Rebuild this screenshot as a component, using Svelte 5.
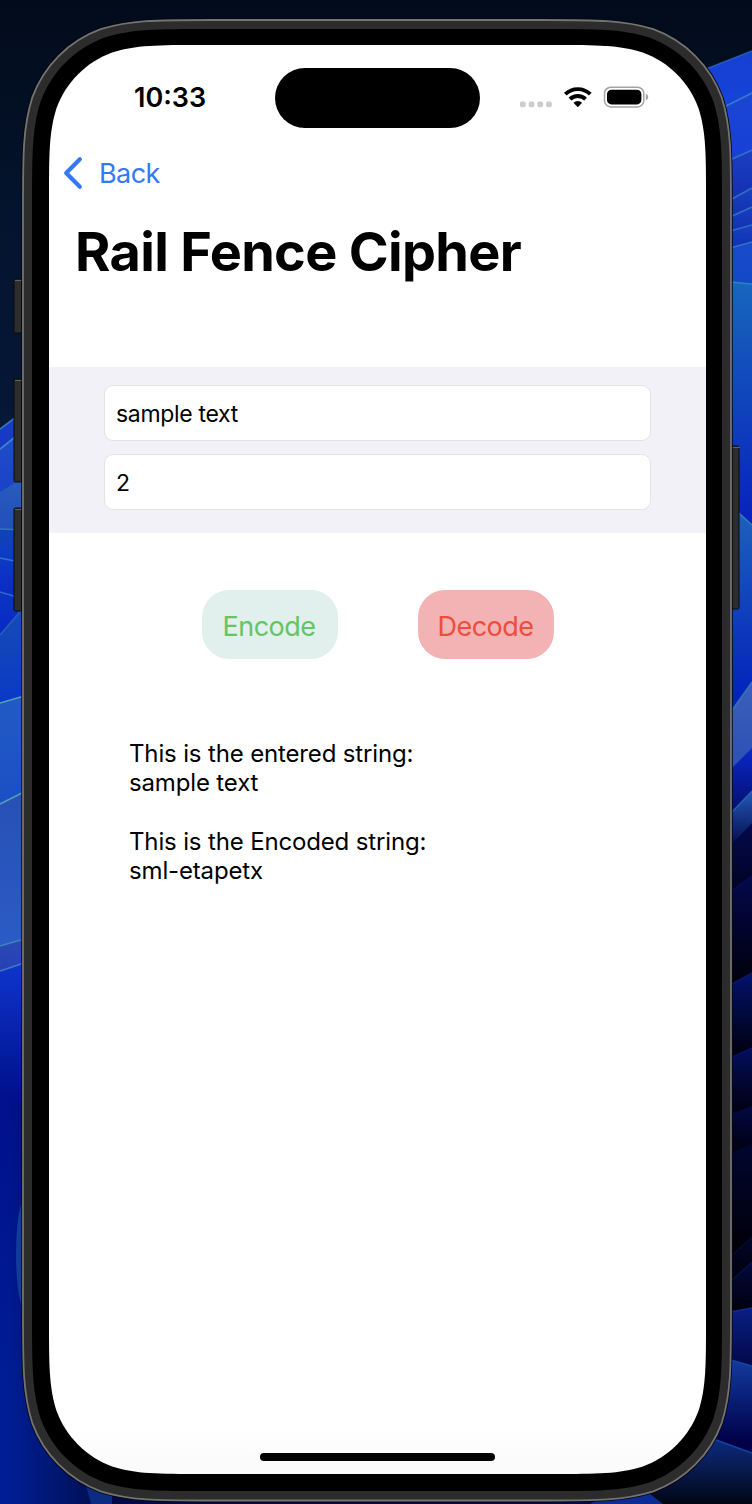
<script>
  let message = $state('sample text');
  let rails = $state('2');

  // Rounded rectangle with continuous-curvature corners
  function squircle(x0, y0, x1, y1, r) {
    const a = 1.528665 * r, b = 1.088493 * r, c = 0.868407 * r;
    const d = 0.631494 * r, e = 0.074911 * r, f = 0.372824 * r, g = 0.169059 * r;
    return `M${x0 + a} ${y0}H${x1 - a}` +
      `C${x1 - b} ${y0} ${x1 - c} ${y0} ${x1 - d} ${y0 + e}C${x1 - f} ${y0 + g} ${x1 - g} ${y0 + f} ${x1 - e} ${y0 + d}C${x1} ${y0 + c} ${x1} ${y0 + b} ${x1} ${y0 + a}` +
      `V${y1 - a}C${x1} ${y1 - b} ${x1} ${y1 - c} ${x1 - e} ${y1 - d}C${x1 - g} ${y1 - f} ${x1 - f} ${y1 - g} ${x1 - d} ${y1 - e}C${x1 - c} ${y1} ${x1 - b} ${y1} ${x1 - a} ${y1}` +
      `H${x0 + a}C${x0 + b} ${y1} ${x0 + c} ${y1} ${x0 + d} ${y1 - e}C${x0 + f} ${y1 - g} ${x0 + g} ${y1 - f} ${x0 + e} ${y1 - d}C${x0} ${y1 - c} ${x0} ${y1 - b} ${x0} ${y1 - a}` +
      `V${y0 + a}C${x0} ${y0 + b} ${x0} ${y0 + c} ${x0 + e} ${y0 + d}C${x0 + g} ${y0 + f} ${x0 + f} ${y0 + g} ${x0 + d} ${y0 + e}C${x0 + c} ${y0} ${x0 + b} ${y0} ${x0 + a} ${y0}Z`;
  }

  // Wallpaper petals: [x start, y start, x end, y end, gradient length, top, bottom, rim]
  const petals = [
    [0, 429, 24, 411, 30, '#1a3fc4', '#1535c8', '#3f86c8'],
    [0, 449, 24, 430, 55, '#1f4fcb', '#1a3fc6', '#4a96cc'],
    [0, 493, 24, 478, 50, '#2a5cbc', '#1d4cb8', '#2a5cbc'],
    [0, 529, 24, 530, 32, '#1243b4', '#0a3ac8', '#3a82c4'],
    [0, 558, 24, 563, 36, '#0c3bc4', '#0a28c4', '#3f7fd0'],
    [0, 592, 24, 599, 50, '#0b35c2', '#0824c8', '#3c74cc'],
    [0, 635, 24, 607, 70, '#174cb4', '#0a38c8', '#2c66bc'],
    [0, 703, 24, 696, 95, '#225ac4', '#1b50c4', '#63b5b8'],
    [0, 804, 24, 792, 145, '#2850b4', '#2a5cc6', '#5bb0b4'],
    [0, 946, 24, 939, 26, '#2b49b8', '#2640b4', '#4a8fb8'],
    [0, 971, 24, 963, 125, '#0f35cc', '#00118c', '#468fb4'],
    [0, 1096, 150, 1096, 320, '#00118c', '#001e94', 'none'],
    [696, 73, 752, 51, 48, '#163fd0', '#1545dc', '#2b68cc'],
    [716, 111, 752, 93, 56, '#1a46d2', '#163fd8', '#3f86c8'],
    [730, 160, 752, 150, 40, '#1a3fc0', '#142fb4', '#3a7cc0'],
    [730, 200, 752, 188, 18, '#1840c0', '#1230ae', '#3a7cc0'],
    [730, 217, 752, 207, 16, '#163ec0', '#1230b0', '#3a7cc0'],
    [730, 231, 752, 225, 18, '#1640c0', '#1030b4', '#3a7cc0'],
    [730, 248, 752, 242, 38, '#1a4acc', '#1248c8', '#3a82c4'],
    [730, 282, 752, 284, 230, '#1866bc', '#0824bc', '#3a8cc0'],
    [730, 505, 752, 525, 170, '#1f63bc', '#0324bc', '#3a8cb8'],
    [730, 713, 752, 682, 60, '#3b5fbc', '#2c50b4', '#3c78b4'],
    [730, 769, 752, 747, 50, '#0a28cc', '#030c60', '#2c56b4'],
    [730, 814, 752, 791, 32, '#2459b8', '#03094c', '#2c66b4'],
    [730, 846, 752, 823, 50, '#03094c', '#010320', 'none'],
    [730, 892, 752, 876, 90, '#03084c', '#00000c', '#060c58'],
    [730, 985, 752, 973, 70, '#03126c', '#00000e', '#0a1c70'],
    [730, 1058, 752, 1048, 54, '#030e5c', '#000010', '#06146c'],
    [730, 1114, 752, 1106, 38, '#020944', '#00000e', 'none'],
    [730, 1153, 752, 1144, 102, '#010630', '#000006', 'none'],
    [730, 1257, 752, 1237, 24, '#020628', '#00000c', '#060c34'],
    [730, 1282, 752, 1262, 28, '#030a3c', '#00000e', '#08124c'],
    [730, 1312, 752, 1308, 50, '#0a1f84', '#030a4c', '#1434a0'],
    [714, 1355, 752, 1366, 76, '#143ea4', '#000048', '#184cac'],
    [640, 1412, 752, 1453, 56, '#113cae', '#01020c', '#1b4cb4'],
  ];
  const keys = [[14, 279, 54], [14, 379, 103], [14, 508, 103], [731, 446, 163]];
</script>

<main>
  <svg class="backdrop" width="752" height="1504" viewBox="0 0 752 1504" aria-hidden="true">
    <defs>
      <linearGradient id="sky" x1="0" y1="0" x2="0" y2="440" gradientUnits="userSpaceOnUse">
        <stop offset="0" stop-color="#020b1a" /><stop offset=".5" stop-color="#04142e" /><stop offset="1" stop-color="#061838" />
      </linearGradient>
      <linearGradient id="shade" x1="8" y1="0" x2="90" y2="0" gradientUnits="userSpaceOnUse">
        <stop offset="0" stop-color="#000830" stop-opacity="0" /><stop offset="1" stop-color="#000830" stop-opacity=".6" />
      </linearGradient>
      <linearGradient id="paper" x1="0" y1="1430" x2="0" y2="1474" gradientUnits="userSpaceOnUse">
        <stop offset="0" stop-color="#fff" /><stop offset="1" stop-color="#fafafa" />
      </linearGradient>
      {#each petals as p, i}
        <linearGradient id="p{i}" x1="0" y1={Math.min(p[1], p[3])} x2="0" y2={Math.max(p[1], p[3]) + p[4]} gradientUnits="userSpaceOnUse">
          <stop offset="0" stop-color={p[5]} /><stop offset="1" stop-color={p[6]} />
        </linearGradient>
      {/each}
    </defs>
    <rect width="752" height="1504" fill="url(#sky)" />
    {#each petals as p, i}
      <path d="M{p[0]} {p[1]}L{p[2]} {p[3]}V1504H{p[0]}Z" fill="url(#p{i})" />
      <path d="M{p[0]} {p[1]}L{p[2]} {p[3]}" stroke={p[7]} stroke-width="1.6" stroke-opacity=".8" />
    {/each}
    <rect y="1100" width="110" height="404" fill="url(#shade)" />
    <ellipse cx="25" cy="1254" rx="9" ry="55" fill="#103c9c" />
    <path d="M82 1470H400V1504H91Z" fill="#0c2c84" />
    <path d="M112 1480H640V1504H112Z" fill="#030a48" />
    <path d="M632 1480L663 1504H590Z" fill="#0c2c94" />
    {#each keys as b}
      <rect x={b[0]} y={b[1]} width="8" height={b[2]} rx="1.5" fill="#2d2d2d" stroke="#0a0a0a" stroke-width="1" />
      <path d="M{b[0] + 1} {b[1] + 1.5}h8" stroke="#626262" />
    {/each}
    <path d={squircle(22, 19, 732, 1501.5, 124)} fill="#2c2c2c" stroke="#07070b" stroke-width="1.5" />
    <path d={squircle(23, 20, 731, 1500.5, 123)} fill="none" stroke="#737373" stroke-width="1.8" />
    <path d={squircle(32, 29, 722, 1491, 115)} fill="#000" />
    <path d={squircle(49, 45, 706, 1474, 100)} fill="url(#paper)" />
  </svg>

  <div class="screen">
    <header class="status">
      <time>10:33</time>
      <div class="island"></div>
      <svg class="indicators" width="129" height="30" viewBox="520 83 129 30" aria-hidden="true">
        {#each [520, 528.7, 537.4, 546.1] as x}
          <rect {x} y="101.5" width="5.7" height="5.7" rx="1.8" fill="#ccc" />
        {/each}
        <g fill="none" stroke="#000" stroke-width="3.9">
          <path d="M565.3 94.2a18 18 0 0 1 25 0" />
          <path d="M570 99.1a11.3 11.3 0 0 1 15.6 0" />
        </g>
        <path d="M577.8 107.2l-4.3-4.4a6.2 6.2 0 0 1 8.6 0z" />
        <rect x="604.5" y="87.3" width="39.3" height="19.6" rx="6.2" fill="none" stroke="#a3a3a3" stroke-width="1.5" />
        <rect x="607" y="89.8" width="34.4" height="14.6" rx="4.4" />
        <path d="M645.8 93.7c3.2 1.2 3.2 5.5 0 6.7z" fill="#a3a3a3" />
      </svg>
    </header>

    <nav>
      <svg width="20" height="34" viewBox="0 0 20 34" aria-hidden="true">
        <path d="M16.8 3.3L3.2 17l13.6 13.7" fill="none" stroke="#3478f6" stroke-width="4.2" stroke-linecap="round" stroke-linejoin="round" />
      </svg>
      <span>Back</span>
    </nav>

    <h1>Rail Fence Cipher</h1>

    <section class="fields">
      <div class="field">{message}</div>
      <div class="field">{rails}</div>
    </section>

    <div class="actions">
      <button class="encode">Encode</button>
      <button class="decode">Decode</button>
    </div>

    <section class="result">
      <p>This is the entered string:<br />{message}</p>
      <p>This is the Encoded string:<br />sml-etapetx</p>
    </section>

    <div class="home"></div>
  </div>
</main>

<style>
  :global(body) { margin: 0; background: #020b1a; }
  main {
    position: relative;
    box-sizing: border-box;
    width: 752px;
    height: 1504px;
    padding: 45px 46px 30px 49px;
    overflow: hidden;
    font-family: Inter, "Liberation Sans", sans-serif;
    color: #000;
  }
  .backdrop { position: absolute; inset: 0; }
  .screen { position: relative; display: flex; flex-direction: column; height: 1429px; }
  .status { display: flex; align-items: center; height: 60px; padding: 23px 57px 0 85px; }
  time { width: 141px; font-size: 27px; line-height: 34px; font-weight: 600; }
  .island { width: 205px; height: 60px; border-radius: 30px; background: #000; }
  .indicators { display: block; margin-left: auto; }
  nav { display: flex; align-items: center; height: 40px; margin-top: 25px; padding-left: 14px; color: #3478f6; font-size: 27px; letter-spacing: -0.6px; }
  nav svg { margin-right: 16px; }
  h1 { margin: 29px 0 0 26px; font-size: 54px; line-height: 60px; font-weight: 700; letter-spacing: -0.68px; white-space: nowrap; }
  .fields { display: flex; flex-direction: column; gap: 13px; box-sizing: border-box; height: 166px; margin-top: 85px; padding: 18px 55px 0; background: #f2f1f7; }
  .field { display: flex; align-items: center; box-sizing: border-box; height: 56px; padding: 1px 0 0 11px; border: 1px solid #e3e3e5; border-radius: 9px; background: #fff; font-size: 23px; letter-spacing: -0.33px; }
  .actions { display: flex; justify-content: center; gap: 80px; margin-top: 57px; }
  button { width: 136px; height: 69px; padding: 4px 0 0; border: 0; border-radius: 27px; font: 400 27px Inter, "Liberation Sans", sans-serif; letter-spacing: -0.5px; }
  .encode { padding-right: 1px; background: #e1f0ec; color: #65c466; }
  .decode { background: #f3b2b3; color: #eb4e3d; }
  .result { margin: 80px 0 0 80px; font-size: 24px; line-height: 29.2px; letter-spacing: -0.15px; }
  p { margin: 0 0 29.5px; }
  .home { width: 235px; height: 8px; margin: auto auto 13px 211px; border-radius: 4px; background: #000; }
</style>
